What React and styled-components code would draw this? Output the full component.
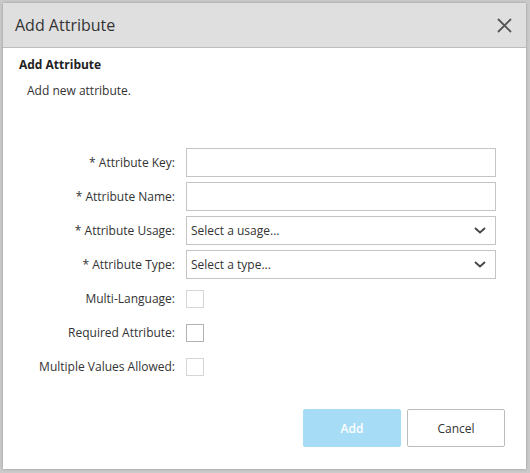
import React from 'react'
import styled, { createGlobalStyle } from 'styled-components'

const Global = createGlobalStyle`
  html, body { margin: 0; padding: 0; }
  body {
    font-family: "Open Sans", "Noto Sans", sans-serif;
    color: #333;
    background: #cdcdcd;
  }
  * { box-sizing: border-box; }
`

const Backdrop = styled.div`
  width: 530px;
  height: 473px;
  padding: 3px 4px 4px 3px;
  background: #cbcbcb;
  overflow: hidden;
`

const Dialog = styled.div`
  width: 523px;
  height: 466px;
  background: #fff;
  display: flex;
  flex-direction: column;
  box-shadow: 0 0 3px rgba(0,0,0,0.25);
`

const Header = styled.div`
  height: 45px;
  background: #dfdfdf;
  border-bottom: 1px solid #bdbdbd;
  display: flex;
  align-items: center;
  justify-content: space-between;
  padding: 0 14px 0 12px;
`

const HeaderTitle = styled.h2`
  margin: 0;
  font-size: 16px;
  font-weight: 400;
  color: #333;
`

const CloseButton = styled.button`
  border: none;
  background: transparent;
  padding: 0;
  width: 16px;
  height: 16px;
  display: flex;
  align-items: center;
  justify-content: center;
  cursor: pointer;
`

const Body = styled.div`
  flex: 1;
  display: flex;
  flex-direction: column;
  padding: 8px 21px 0 16px;
`

const Heading = styled.h3`
  margin: 0;
  font-size: 12px;
  font-weight: 700;
  line-height: 18px;
  color: #222;
`

const Description = styled.p`
  margin: 8px 0 0 8px;
  font-size: 12px;
  line-height: 18px;
  color: #333;
`

const Form = styled.div`
  margin-top: 48px;
  display: grid;
  grid-template-columns: 156px 310px;
  column-gap: 11px;
  row-gap: 5px;
  align-items: center;
`

const Label = styled.label`
  text-align: right;
  font-size: 12px;
  color: #333;
  white-space: nowrap;
`

const TextInput = styled.div`
  height: 29px;
  border: 1px solid #c4c4c4;
  background: #fff;
`

const Select = styled.div`
  height: 29px;
  border: 1px solid #c4c4c4;
  background: #fff;
  display: flex;
  align-items: center;
  justify-content: space-between;
  padding: 0 9px 0 4px;
  font-size: 12px;
  color: #333;
`

const CheckCell = styled.div`
  height: 29px;
  display: flex;
  align-items: center;
`

const Checkbox = styled.span`
  width: 18px;
  height: 18px;
  border: 1px solid ${p => (p.$dark ? '#b3b3b3' : '#d6d6d6')};
  background: #fff;
`

const Footer = styled.div`
  margin-top: auto;
  display: flex;
  justify-content: flex-end;
  gap: 6px;
  padding-bottom: 22px;
`

const Button = styled.button`
  width: ${p => p.$w}px;
  height: 38px;
  font-family: inherit;
  font-size: 12px;
  border-radius: 2px;
  border: 1px solid ${p => (p.$primary ? '#a6dcf5' : '#bcbcbc')};
  background: ${p => (p.$primary ? '#a6dcf5' : '#fff')};
  color: ${p => (p.$primary ? '#fff' : '#333')};
  font-weight: ${p => (p.$primary ? 600 : 400)};
`

const Chevron = () => (
  <svg width="12" height="7" viewBox="0 0 12 7">
    <path d="M1 1 L6 5.5 L11 1" fill="none" stroke="#444" strokeWidth="1.8" />
  </svg>
)

const CloseIcon = () => (
  <svg width="15" height="15" viewBox="0 0 15 15">
    <path d="M1 1 L14 14 M14 1 L1 14" stroke="#555" strokeWidth="1.8" />
  </svg>
)

const checks = [
  { label: 'Multi-Language:', dark: false },
  { label: 'Required Attribute:', dark: true },
  { label: 'Multiple Values Allowed:', dark: false },
]

export default function App() {
  return (
    <>
      <Global />
      <Backdrop>
        <Dialog>
          <Header>
            <HeaderTitle>Add Attribute</HeaderTitle>
            <CloseButton><CloseIcon /></CloseButton>
          </Header>
          <Body>
            <Heading>Add Attribute</Heading>
            <Description>Add new attribute.</Description>
            <Form>
              <Label>* Attribute Key:</Label>
              <TextInput />
              <Label>* Attribute Name:</Label>
              <TextInput />
              <Label>* Attribute Usage:</Label>
              <Select>Select a usage...<Chevron /></Select>
              <Label>* Attribute Type:</Label>
              <Select>Select a type...<Chevron /></Select>
              {checks.map(c => (
                <React.Fragment key={c.label}>
                  <Label>{c.label}</Label>
                  <CheckCell><Checkbox $dark={c.dark} /></CheckCell>
                </React.Fragment>
              ))}
            </Form>
            <Footer>
              <Button $primary $w={98}>Add</Button>
              <Button $w={98}>Cancel</Button>
            </Footer>
          </Body>
        </Dialog>
      </Backdrop>
    </>
  )
}
